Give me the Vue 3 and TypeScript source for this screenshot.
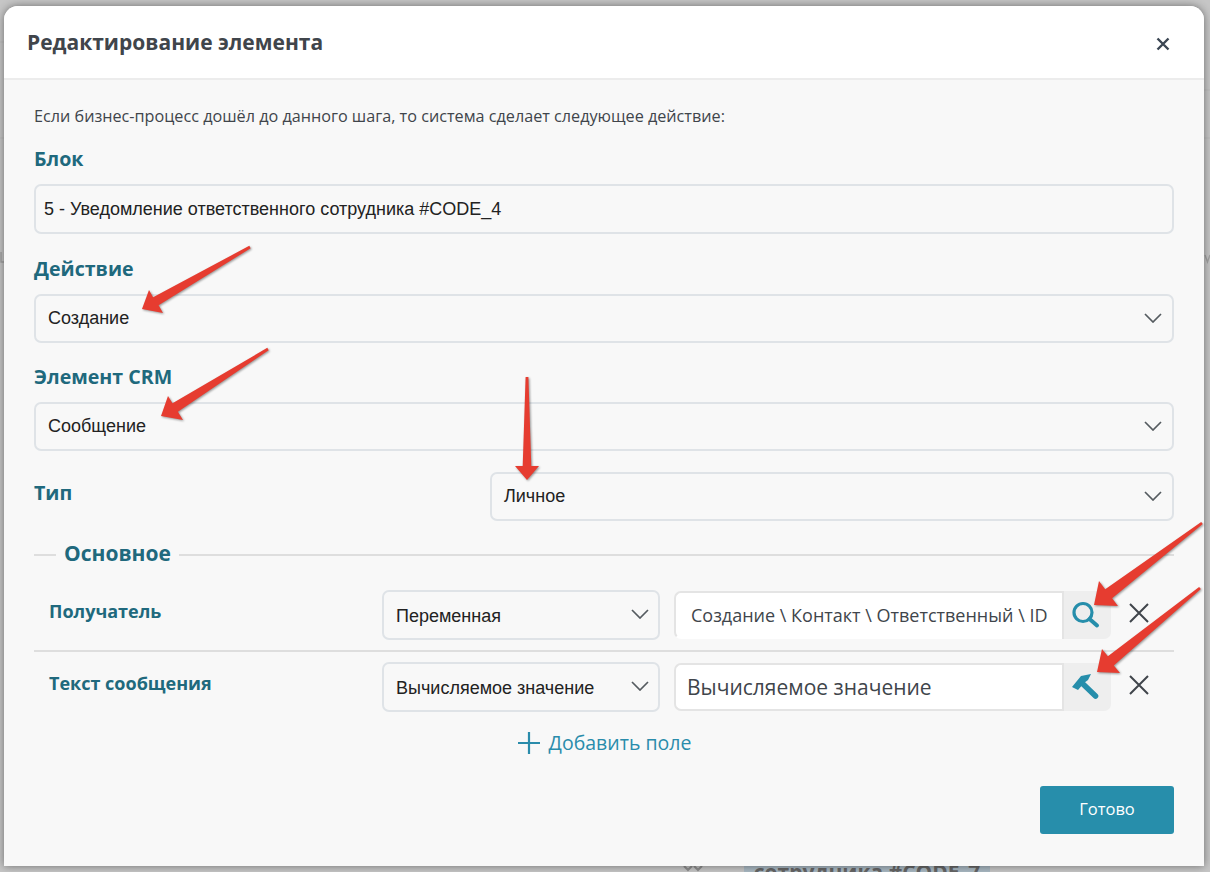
<script setup lang="ts">
type P = [number, number];
interface Arrow { tail: P; tip: P; a: P; b: P }

const arrows: Arrow[] = [
  { tail: [250, 247], tip: [142, 309], a: [149, 290], b: [163, 313] },
  { tail: [268, 349], tip: [161, 416], a: [168, 396], b: [183, 420] },
  { tail: [527, 377], tip: [527, 480], a: [515, 466], b: [539, 466] },
  { tail: [1202, 523], tip: [1094, 605], a: [1099, 581], b: [1118, 606] },
  { tail: [1200, 588], tip: [1097, 672], a: [1102, 649], b: [1120, 673] },
];

function arrowPoints(ar: Arrow): string {
  const dx = ar.tail[0] - ar.tip[0];
  const dy = ar.tail[1] - ar.tip[1];
  const len = Math.hypot(dx, dy);
  const ux = dx / len;
  const uy = dy / len;
  const neck = (p: P): P => {
    const t = (p[0] - ar.tip[0]) * ux + (p[1] - ar.tip[1]) * uy;
    const cx = ar.tip[0] + ux * t;
    const cy = ar.tip[1] + uy * t;
    return [cx + (p[0] - cx) * 0.36, cy + (p[1] - cy) * 0.36];
  };
  const side = (p: P): P => {
    const s = (p[0] - ar.tip[0]) * -uy + (p[1] - ar.tip[1]) * ux > 0 ? 1 : -1;
    return [ar.tail[0] - uy * s * 1.4, ar.tail[1] + ux * s * 1.4];
  };
  const pts: P[] = [ar.tip, ar.a, neck(ar.a), side(ar.a), side(ar.b), neck(ar.b), ar.b];
  return pts.map((p) => `${p[0].toFixed(1)},${p[1].toFixed(1)}`).join(" ");
}
</script>

<template>
  <div class="page">
    <div class="behind" aria-hidden="true">
      <svg class="behind-marks" width="1210" height="872" viewBox="0 0 1210 872">
        <path d="M1204 90h6M1204 138h6M0 42h4M0 138h4" stroke="#bababa" stroke-width="1" fill="none" />
        <path d="M1 252v10h3M1205 255l2.5 7 2.5-7" stroke="#a2a2a2" stroke-width="1.4" fill="none" />
        <path d="M684 866l4 4 4-4M694 866l4 4 4-4" stroke="#8e8e8e" stroke-width="2" fill="none" />
      </svg>
      <span class="behind-tag">сотрудника #CODE_7</span>
    </div>

    <section class="modal">
      <header class="modal-head">
        <h2>Редактирование элемента</h2>
        <svg class="close" width="14" height="14" viewBox="0 0 14 14">
          <path d="M1.5 1.5l11 11M12.5 1.5l-11 11" />
        </svg>
      </header>

      <div class="modal-body">
        <p class="intro">Если бизнес-процесс дошёл до данного шага, то система сделает следующее действие:</p>

        <label class="label label-block">Блок</label>
        <div class="control block-input"><span>5 - Уведомление ответственного сотрудника #CODE_4</span></div>

        <label class="label label-action">Действие</label>
        <div class="control select">
          <span>Создание</span>
          <svg class="chev" width="18" height="10" viewBox="0 0 18 10"><path d="M1 1l8 8 8-8" /></svg>
        </div>

        <label class="label label-crm">Элемент CRM</label>
        <div class="control select">
          <span>Сообщение</span>
          <svg class="chev" width="18" height="10" viewBox="0 0 18 10"><path d="M1 1l8 8 8-8" /></svg>
        </div>

        <div class="type-row">
          <label class="label type-label">Тип</label>
          <div class="control select type-select">
            <span>Личное</span>
            <svg class="chev" width="18" height="10" viewBox="0 0 18 10"><path d="M1 1l8 8 8-8" /></svg>
          </div>
        </div>

        <div class="legend">
          <span class="legend-text">Основное</span>
        </div>

        <div class="field-row first">
          <div class="field-name">Получатель</div>
          <div class="control select small">
            <span>Переменная</span>
            <svg class="chev" width="18" height="10" viewBox="0 0 18 10"><path d="M1 1l8 8 8-8" /></svg>
          </div>
          <div class="group">
            <div class="group-input var">Создание \ Контакт \ Ответственный \ ID</div>
            <div class="group-btn">
              <svg class="btn-icon" width="30" height="30" viewBox="0 0 30 30">
                <circle cx="12" cy="12.5" r="9" fill="none" stroke="#268eab" stroke-width="3.2" />
                <path d="M18.5 19l7.5 6.5" fill="none" stroke="#268eab" stroke-width="4" stroke-linecap="round" />
              </svg>
            </div>
          </div>
          <svg class="remove" width="20" height="20" viewBox="0 0 20 20"><path d="M1 1l18 18M19 1L1 19" /></svg>
        </div>

        <div class="field-row second">
          <div class="field-name">Текст сообщения</div>
          <div class="control select small">
            <span>Вычисляемое значение</span>
            <svg class="chev" width="18" height="10" viewBox="0 0 18 10"><path d="M1 1l8 8 8-8" /></svg>
          </div>
          <div class="group">
            <div class="group-input calc">Вычисляемое значение</div>
            <div class="group-btn">
              <svg class="btn-icon hammer" width="28" height="28" viewBox="0 0 28 28">
                <path d="M1 14L10 3l10-2-3 6-4 3-6 7z" fill="#268eab" />
                <path d="M12 11l12.5 12" fill="none" stroke="#268eab" stroke-width="5.6" stroke-linecap="round" />
              </svg>
            </div>
          </div>
          <svg class="remove" width="20" height="20" viewBox="0 0 20 20"><path d="M1 1l18 18M19 1L1 19" /></svg>
        </div>

        <div class="add">
          <svg width="24" height="24" viewBox="0 0 24 24"><path d="M12 1v22M1 12h22" /></svg>
          <span>Добавить поле</span>
        </div>

        <div class="actions">
          <button type="button" class="done">Готово</button>
        </div>
      </div>
    </section>

    <svg class="marks" width="1210" height="872" viewBox="0 0 1210 872">
      <polygon v-for="(ar, i) in arrows" :key="i" :points="arrowPoints(ar)" />
    </svg>
  </div>
</template>

<style>
html, body { margin: 0; background: #c6c6c6; }
</style>

<style scoped>
.page {
  position: relative;
  width: 1210px;
  height: 872px;
  box-sizing: border-box;
  padding: 6px 6px 6px 4px;
  overflow: hidden;
  background: #c6c6c6;
  font-family: "Open Sans", sans-serif;
}
.behind { position: absolute; inset: 0; overflow: hidden; }
.behind-marks { position: absolute; left: 0; top: 0; }
.behind-tag {
  position: absolute;
  left: 744px;
  top: 860px;
  width: 246px;
  height: 12px;
  background: #a9b8c2;
  color: #666;
  font-size: 21px;
  font-weight: 700;
  text-align: center;
  line-height: 24px;
  white-space: nowrap;
}
.modal {
  position: relative;
  height: 860px;
  display: flex;
  flex-direction: column;
  background: #f8f8f8;
  border-radius: 14px 14px 0 0;
  box-shadow: 0 0 8px rgba(0, 0, 0, 0.45);
  overflow: hidden;
}
.modal-head {
  height: 74px;
  flex: none;
  box-sizing: border-box;
  display: flex;
  align-items: center;
  justify-content: space-between;
  padding: 0 34px 0 23px;
  background: #fff;
  border-bottom: 2px solid #ececec;
}
.modal-head h2 {
  margin: 0;
  font-size: 21px;
  font-weight: 700;
  color: #40454b;
}
.close { margin-top: 4px; }
.close path { fill: none; stroke: #3b4653; stroke-width: 2.4; }
.modal-body {
  flex: 1;
  padding: 0 30px;
  display: flex;
  flex-direction: column;
}
.intro {
  margin: 26px 0 0;
  font-size: 16.2px;
  line-height: 20px;
  color: #40454b;
  white-space: nowrap;
}
.label {
  display: block;
  font-size: 19.6px;
  font-weight: 700;
  line-height: 24px;
  color: #20697d;
}
.label-block { margin-top: 21px; }
.label-action { margin-top: 23px; }
.label-crm { margin-top: 22px; }
.block-input { margin-top: 13px; height: 50px; padding-left: 8px; }
.block-input span { margin-top: 1px; }
.control {
  box-sizing: border-box;
  display: flex;
  align-items: center;
  border: 2px solid #dfe3e7;
  border-radius: 7px;
  font-family: "Liberation Sans", Arial, sans-serif;
  font-size: 18px;
  color: #222;
}
.select {
  height: 49px;
  margin-top: 13px;
  padding: 0 10px 0 12px;
  justify-content: space-between;
}
.chev { margin-top: -2px; }
.chev path { fill: none; stroke: #555b60; stroke-width: 1.7; }
.type-row {
  display: flex;
  align-items: center;
  justify-content: space-between;
  margin-top: 21px;
}
.type-select { width: 684px; margin-top: 0; }
.type-label { margin-bottom: 8px; }
.legend {
  margin-top: 22px;
  display: flex;
  align-items: center;
  height: 24px;
  border: 0;
  position: relative;
}
.legend::before {
  content: "";
  width: 22px;
  height: 2px;
  background: #dedede;
}
.legend::after {
  content: "";
  flex: 1;
  height: 2px;
  background: #dedede;
}
.legend-text {
  padding: 0 8px;
  margin-top: -4px;
  font-size: 21px;
  line-height: 24px;
  font-weight: 700;
  color: #20697d;
}
.field-row {
  display: flex;
  align-items: center;
}
.field-row.first {
  margin-top: 23px;
  padding-bottom: 10px;
  border-bottom: 2px solid #dedede;
}
.field-row.second { margin-top: 10px; }
.field-name {
  width: 348px;
  flex: none;
  box-sizing: border-box;
  padding-left: 15px;
  font-size: 18px;
  line-height: 24px;
  font-weight: 700;
  color: #20697d;
  margin-bottom: 8px;
}
.small {
  width: 278px;
  height: 50px;
  margin-top: 0;
  flex: none;
  padding-right: 9px;
}
.small span { margin-top: 2px; }
.group {
  margin-left: 14px;
  margin-top: 1px;
  width: 437px;
  height: 48px;
  flex: none;
  display: flex;
  align-self: flex-start;
}
.group-input {
  flex: 1;
  box-sizing: border-box;
  display: flex;
  align-items: center;
  background: #fff;
  border: 2px solid #e4e4e4;
  border-right: 0;
  border-radius: 7px 0 0 7px;
  color: #40454b;
  white-space: nowrap;
  overflow: hidden;
}
.group-input.var {
  padding-left: 15px;
  font-size: 18px;
  border-bottom-color: transparent;
}
.group-input.calc {
  padding-left: 11px;
  font-size: 21px;
}
.group-btn {
  width: 49px;
  flex: none;
  display: flex;
  align-items: center;
  justify-content: center;
  background: #eeeeee;
  border-radius: 0 0 7px 0;
  border-left: 2px solid #e4e4e4;
  box-sizing: border-box;
}
.btn-icon { margin-right: 4px; }
.hammer { margin-right: 5px; }
.remove { margin-left: 18px; margin-bottom: 4px; }
.remove path { fill: none; stroke: #40454b; stroke-width: 2; }
.add {
  margin-top: 19px;
  display: flex;
  align-items: center;
  justify-content: center;
  gap: 8px;
  font-size: 19.5px;
  line-height: 24px;
  color: #2a8cab;
}
.add path { fill: none; stroke: #2a8cab; stroke-width: 2.2; }
.actions {
  margin-top: 31px;
  display: flex;
  justify-content: flex-end;
}
.done {
  width: 134px;
  height: 48px;
  border: 0;
  border-radius: 3px;
  padding: 0 0 3px;
  background: #278eab;
  color: #fff;
  font-family: "Open Sans", sans-serif;
  font-size: 16.5px;
}
.marks {
  position: absolute;
  left: 0;
  top: 0;
  pointer-events: none;
  filter: drop-shadow(1px 1.5px 1px rgba(0, 0, 0, 0.4));
}
.marks polygon { fill: #e63c30; }
</style>
